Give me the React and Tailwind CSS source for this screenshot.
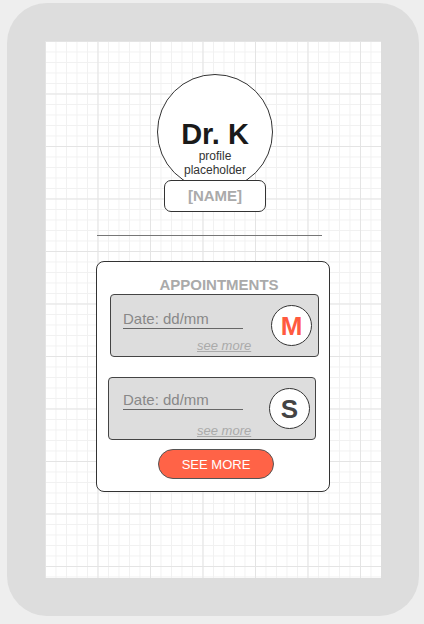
import React from 'react'

const gridBg =
  '[background-image:linear-gradient(#e4e4e4_1px,transparent_1px),linear-gradient(90deg,#e4e4e4_1px,transparent_1px),linear-gradient(#f1f1f1_1px,transparent_1px),linear-gradient(90deg,#f1f1f1_1px,transparent_1px)] [background-size:52.5px_52.5px,52.5px_52.5px,10.5px_10.5px,10.5px_10.5px]'

function Appointment({ letter, letterClass, cardClass, padClass, moreClass, circleClass }) {
  return (
    <div className={`flex items-center justify-between h-[63px] bg-[#dddddd] border border-[#444] rounded-[4px] ${cardClass}`}>
      <div className={`self-start flex flex-col ${padClass}`}>
        <div className="w-[120px] border-b border-[#666] pb-[2px] text-[15px] leading-none text-[#888]">
          Date: dd/mm
        </div>
        <a className={`ml-[74px] text-[13px] leading-none italic underline text-[#aaa] ${moreClass}`}>see more</a>
      </div>
      <div className={`w-[41px] h-[41px] rounded-full border border-[#333] bg-white flex items-center justify-center text-[26px] font-bold leading-none ${letterClass} ${circleClass}`}>
        {letter}
      </div>
    </div>
  )
}

export default function App() {
  return (
    <div className="w-[424px] h-[624px] bg-[#eeeeee] pt-[3px] pl-[7px] font-['Liberation_Sans',Arial,sans-serif]">
      <div className="w-[412px] h-[613px] bg-[#dddddd] rounded-[40px] p-[38px]">
        <div className={`w-[336px] h-[537px] bg-white ${gridBg} flex flex-col items-center pt-[33px]`}>
          <div className="ml-[4px] w-[116px] h-[116px] rounded-full border border-[#333] bg-white flex flex-col items-center pt-[45px]">
            <div className="text-[29px] font-bold leading-none text-[#1a1a1a]">Dr. K</div>
            <div className="text-[12px] leading-[14px] text-[#333] text-center">
              profile
              <br />
              placeholder
            </div>
          </div>
          <div className="relative ml-[4px] mt-[-10px] w-[102px] h-[32px] rounded-[7px] border border-[#333] bg-white flex items-center justify-center text-[15px] font-bold text-[#aaa]">
            [NAME]
          </div>
          <div className="self-start ml-[52px] mt-[23px] w-[225px] h-px bg-[#777]" />
          <div className="self-start ml-[51px] mt-[25px] w-[234px] h-[231px] rounded-[8px] border border-[#333] bg-white flex flex-col pt-[15px]">
            <div className="pl-[12px] text-center text-[15px] font-bold leading-none text-[#aaa]">APPOINTMENTS</div>
            <Appointment
              letter="M"
              letterClass="text-[#ff5a3f]"
              cardClass="ml-[13px] mt-[2px] w-[209px]"
              padClass="pl-[12px] pt-[16px]"
              moreClass="mt-[10px]"
              circleClass="mr-[6px]"
            />
            <Appointment
              letter="S"
              letterClass="text-[#444]"
              cardClass="ml-[11px] mt-[20px] w-[208px]"
              padClass="pl-[14px] pt-[14px]"
              moreClass="mt-[14px]"
              circleClass="mr-[5px]"
            />
            <button className="ml-[61px] mt-[9px] w-[116px] h-[30px] rounded-full bg-[#ff6347] border border-[#555] text-white text-[13px] leading-none">
              SEE MORE
            </button>
          </div>
        </div>
      </div>
    </div>
  )
}
